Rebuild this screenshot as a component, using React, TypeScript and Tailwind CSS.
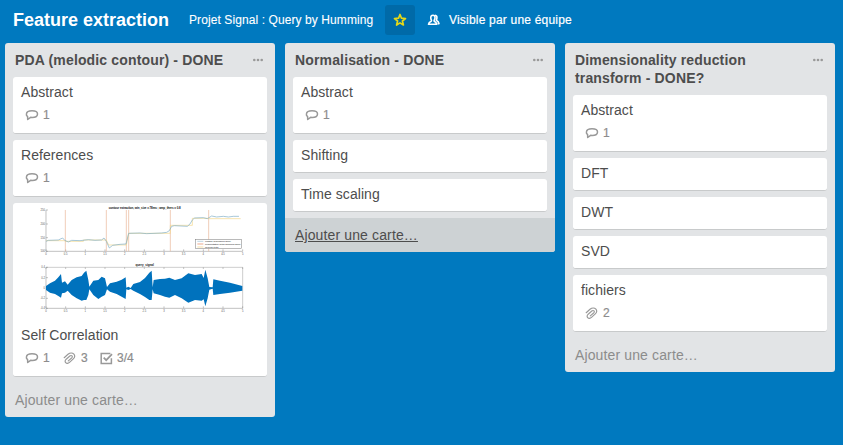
import React from "react";

type Badges = { comments?: number; files?: number; checks?: string };
type CardData = { title: string; badges?: Badges; cover?: boolean };
type ListData = { title: string; cards: CardData[]; hovered?: boolean };

const lists: ListData[] = [
  {
    title: "PDA (melodic contour) - DONE",
    cards: [
      { title: "Abstract", badges: { comments: 1 } },
      { title: "References", badges: { comments: 1 } },
      { title: "Self Correlation", cover: true, badges: { comments: 1, files: 3, checks: "3/4" } },
    ],
  },
  {
    title: "Normalisation - DONE",
    hovered: true,
    cards: [
      { title: "Abstract", badges: { comments: 1 } },
      { title: "Shifting" },
      { title: "Time scaling" },
    ],
  },
  {
    title: "Dimensionality reduction transform - DONE?",
    cards: [
      { title: "Abstract", badges: { comments: 1 } },
      { title: "DFT" },
      { title: "DWT" },
      { title: "SVD" },
      { title: "fichiers", badges: { files: 2 } },
    ],
  },
];

function CommentIcon() {
  return (
    <svg width="14" height="12" viewBox="0 0 14 12" fill="none" stroke="#999" strokeWidth="1.5" strokeLinejoin="round">
      <path d="M2.600 7.600C1.600 6.900 1.200 6 1.400 4.900 1.700 2.900 3.900 1.800 7 1.800c3.300 0 5.500 1 5.500 3.100 0 2.200-2.300 3.500-5.300 3.500-.6 0-1.100 0-1.600-.1L2.700 10.500z" />
    </svg>
  );
}

function ClipIcon() {
  return (
    <svg width="13" height="13" viewBox="0 0 13 13" fill="none" stroke="#999" strokeWidth="1.150" strokeLinecap="round">
      <path d="M1.200 5.700 5 2.300C7 .7 9.600.7 10.900 2.200c1.200 1.500.9 3.300-.6 4.700L6.500 10.400c-1.300 1.200-2.900 1.300-3.800.3-.9-1.100-.6-2.400.5-3.500L6.800 4c.8-.7 1.700-.7 2.200-.1.500.6.3 1.400-.4 2.100L5.300 8.900" />
    </svg>
  );
}

function CheckIcon() {
  return (
    <svg width="13" height="13" viewBox="0 0 13 13" fill="none" stroke="#999" strokeWidth="1.500">
      <path d="M11.400 6.200v5.400H1.200V1.400h9.200" />
      <path d="M3.700 5.600 6.200 8.200 12 2.100" strokeWidth="1.700" />
    </svg>
  );
}

const envelope: [number, number, number][] = [
  [48, 258, 270], [60, 250, 278], [75, 242, 282], [85, 232, 288], [93, 222, 293], [96, 248, 280],
  [105, 244, 278], [113, 254, 272], [125, 240, 285], [140, 232, 295], [155, 228, 302], [162, 218, 300], [169, 212, 300],
  [175, 240, 285], [178, 260, 268], [190, 242, 285], [205, 240, 297], [215, 230, 290], [225, 235, 285],
  [231, 261, 268], [240, 250, 275], [260, 245, 282], [275, 239, 290], [287, 232, 297], [289, 263, 268],
  [295, 260, 270], [302, 264, 267], [310, 252, 272], [330, 246, 282], [345, 234, 291], [358, 218, 300],
  [365, 212, 300], [368, 262, 268], [371, 240, 280], [390, 237, 285], [405, 236, 290], [418, 233, 293],
  [435, 240, 285], [455, 235, 295], [475, 220, 308], [495, 225, 300], [515, 222, 302], [521, 234, 298],
  [526, 209, 319], [533, 235, 295], [538, 261, 269], [548, 262, 266], [550, 238, 285], [570, 242, 282],
  [600, 248, 278], [637, 258, 272],
];
const wavePoints = [
  ...envelope.map(([x, t]) => `${x},${t}`),
  ...[...envelope].reverse().map(([x, , b]) => `${x},${b}`),
].join(" ");
const xTicks = [0, 1, 2, 3, 4, 5, 6, 7, 8, 9, 10];

function Axes({ top, bottom, ys, labels }: { top: number; bottom: number; ys: number[]; labels: string[] }) {
  return (
    <g fontSize="8" fill="#555">
      <path d={`M48 ${top}V${bottom}H638`} fill="none" stroke="#999" strokeWidth="1.800" />
      {xTicks.map((n) => (
        <g key={n}>
          <path d={`M${48 + n * 59} ${bottom}v-6`} stroke="#888" strokeWidth="1.500" />
          <text x={48 + n * 59} y={bottom + 11} textAnchor="middle">{n / 2}</text>
        </g>
      ))}
      {ys.map((y, i) => (
        <g key={y}>
          <path d={`M48 ${y}h6`} stroke="#888" strokeWidth="1.500" />
          <text x="45" y={y + 3} textAnchor="end">{labels[i]}</text>
        </g>
      ))}
    </g>
  );
}

function Cover() {
  return (
    <svg className="block rounded-t-[3px]" width="254" height="117" viewBox="13 203 254 117" fontFamily="Liberation Sans, sans-serif">
      <g transform="translate(30 200) scale(.33333)">
        <text x="344" y="27" textAnchor="middle" fontSize="9" fontWeight="bold" fill="#111" textLength="216">
          contour extraction, win_size = 78ms ; amp_thres = 0.8
        </text>
        <Axes top={30} bottom={154} ys={[30, 72, 113, 154]} labels={["250", "200", "150", "100"]} />
        {[106, 229, 289, 296, 421, 536].map((x) => (
          <path key={x} d={`M${x} 30V154`} stroke="#e8b496" strokeWidth="2" />
        ))}
        <path d="M48 122H106V124H160V120H229L236 135H289L296 100H421V76H487V55H536V56H632" fill="none" stroke="#f2d68a" strokeWidth="2" />
        <path d="M48 124 55 121 85 120 98 114 104 121 115 126 125 121 150 122 175 119 195 121 215 120 222 114 229 124 238 144 248 136 270 133 288 132 296 100 330 99 350 101 395 99 410 97 418 92 425 79 433 77 472 79 480 72 487 60 494 54 520 53 532 56 545 48 560 51 580 49 595 51 610 49 627 49" fill="none" stroke="#7bacc6" strokeWidth="2" />
        <rect x="497" y="118" width="138" height="28" fill="#fff" stroke="#777" strokeWidth="1.500" />
        <path d="M502 124h18" stroke="#7bacc6" strokeWidth="1.500" />
        <path d="M502 132h18" stroke="#d95319" strokeWidth="1.500" />
        <path d="M502 141h18" stroke="#edc150" strokeWidth="1.500" />
        <g fontSize="7.500" fill="#222">
          <text x="525" y="127" textLength="78">contour of hummed query</text>
          <text x="525" y="135" textLength="107">segmentation of the hummed query</text>
          <text x="525" y="144">ground truth</text>
        </g>
        <text x="344" y="198" textAnchor="middle" fontSize="9" fontWeight="bold" fill="#111">query_signal</text>
        <path d="M48 202H638V325" fill="none" stroke="#999" strokeWidth="1.500" />
        {xTicks.map((n) => (
          <path key={n} d={`M${48 + n * 59} 202v5`} stroke="#888" strokeWidth="1.500" />
        ))}
        <Axes top={202} bottom={325} ys={[202, 233, 264, 295, 325]} labels={["0.4", "0.2", "0", "-0.2", "-0.4"]} />
        <polygon points={wavePoints} fill="#0072bd" />
      </g>
    </svg>
  );
}

function BadgeRow({ badges }: { badges: Badges }) {
  return (
    <div className="flex h-[18px] items-center pl-1 text-[12px] leading-[18px] text-[#8c8c8c] [-webkit-text-stroke:0.2px_#8c8c8c]">
      {badges.comments !== undefined && (
        <span className="flex w-[38px] items-center gap-1"><CommentIcon />{badges.comments}</span>
      )}
      {badges.files !== undefined && (
        <span className="flex w-[37px] items-center gap-[5px]"><ClipIcon />{badges.files}</span>
      )}
      {badges.checks && (
        <span className="flex items-center gap-1"><CheckIcon />{badges.checks}</span>
      )}
    </div>
  );
}

function Card({ card }: { card: CardData }) {
  return (
    <article className="mb-[6px] rounded-[3px] border-b border-[#c8cacb] bg-white">
      {card.cover && <Cover />}
      <div className={card.badges ? "px-2 pb-[9px] pt-[6px]" : "px-2 pb-2 pt-[6px]"}>
        <h3 className="h-[18px] text-[14px] leading-[18px] tracking-[0.06px] text-[#4d4d4d]">{card.title}</h3>
        {card.badges && <div className="pt-[5px]"><BadgeRow badges={card.badges} /></div>}
      </div>
    </article>
  );
}

function List({ list }: { list: ListData }) {
  return (
    <section className="w-[270px] shrink-0 overflow-hidden rounded-[3px] bg-[#e2e4e6]">
      <header className="flex justify-between pb-2 pl-[10px] pr-[11px] pt-2">
        <h2 className="w-[220px] text-[14px] font-bold leading-[18px] tracking-[0.150px] text-[#4d4d4d]">{list.title}</h2>
        <svg className="mt-[7px]" width="12" height="4" viewBox="0 0 12 4" fill="#999">
          <circle cx="2.300" cy="2" r="1.300" /><circle cx="6" cy="2" r="1.300" /><circle cx="9.700" cy="2" r="1.300" />
        </svg>
      </header>
      <div className="px-2">
        {list.cards.map((c) => <Card key={c.title} card={c} />)}
      </div>
      <a className={list.hovered
        ? "block h-[34px] bg-[#cdd2d4] px-[10px] pt-2 text-[14px] leading-[18px] tracking-[0.130px] text-[#4d4d4d] underline"
        : "block h-[34px] px-[10px] pt-2 text-[14px] leading-[18px] tracking-[0.130px] text-[#8c8c8c]"}>
        Ajouter une carte…
      </a>
    </section>
  );
}

export default function App() {
  return (
    <div className="h-[445px] w-[843px] overflow-hidden bg-[#0079bf] font-['Liberation_Sans',Arial,sans-serif]">
      <header className="flex h-[43px] items-center pb-[3px] pl-[13px] text-[12px] text-white">
        <h1 className="w-[176px] whitespace-nowrap text-[18px] font-bold leading-[24px]">Feature extraction</h1>
        <span className="w-[196px] whitespace-nowrap tracking-[0.090px] [-webkit-text-stroke:0.1px_#fff]">Projet Signal : Query by Humming</span>
        <button className="flex h-[30px] w-[30px] items-center justify-center rounded-[3px] bg-[#006aa8]">
          <svg width="14" height="14" viewBox="0 0 14 14" fill="none" stroke="#e6d817" strokeWidth="1.700" strokeLinejoin="round">
            <path d="M7 1.500 8.500 5.200 12.500 5.500 9.400 8 10.400 12 7 9.900 3.600 12 4.600 8 1.500 5.500 5.500 5.200z" />
          </svg>
        </button>
        <svg className="ml-[12px] mr-[9px]" width="13" height="12" viewBox="0 0 13 12" fill="none" stroke="#fff" strokeWidth="1.600" strokeLinejoin="round">
          <path d="M6 1.300C4.400 1.300 3.600 2.500 3.800 4.100 3.900 5.200 4.100 5.800 4.500 6.300L4.300 7.200C2.700 7.900 1.700 8.600 1.500 10.300H9.700C9.500 8.600 8.700 7.900 7.200 7.200L7.100 6.300C7.600 5.800 7.900 5.100 8 4.100 8.200 2.400 7.500 1.300 6 1.300z" />
          <path d="M8 1.300C9.600 1.500 10.100 2.700 9.900 4.100 9.800 5 9.600 5.600 9.300 6.200 11 7 11.800 7.900 12 9.600H10.500" />
        </svg>
        <span className="whitespace-nowrap tracking-[0.200px] [-webkit-text-stroke:0.2px_#fff]">Visible par une équipe</span>
      </header>
      <main className="flex items-start gap-[10px] pl-[5px]">
        {lists.map((l) => <List key={l.title} list={l} />)}
      </main>
    </div>
  );
}
